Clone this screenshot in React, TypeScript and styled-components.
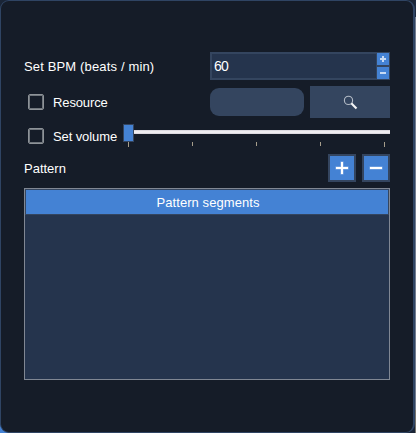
import React from "react";
import styled, { createGlobalStyle } from "styled-components";

const Global = createGlobalStyle`
  * { box-sizing: border-box; }
  body { margin: 0; background: #141b27; overflow: hidden; }
`;

const Window = styled.div`
  display: flex;
  width: 416px;
  height: 433px;
  background:
    linear-gradient(#4482d4, #4482d4) 0 100% / 9px 9px no-repeat,
    #1a2536;
  font: 13px/16px "Liberation Sans", Arial, sans-serif;
  color: #fff;
`;

const Panel = styled.main`
  width: 415px;
  height: 433px;
  padding: 51px 23px 0;
  border: 1px solid #2f4463;
  border-right-width: 2px;
  border-radius: 9px;
  background: #151c28;
`;

const Edge = styled.div`
  width: 1px;
  background: linear-gradient(#1d2a40 0 17px, #737d90 17px 410px, #77746e 410px);
`;

const Row = styled.div<{ $height: number; $gap?: number }>`
  display: flex;
  align-items: center;
  width: 366px;
  height: ${(p) => p.$height}px;
  margin-bottom: ${(p) => p.$gap ?? 0}px;
`;

const Label = styled.span<{ $spacing?: number }>`
  flex: 1;
  padding-top: 2px;
  white-space: pre;
  letter-spacing: ${(p) => p.$spacing ?? 0}px;
`;

const Spinner = styled.div`
  display: flex;
  width: 180px;
  height: 28px;
  border: 1px solid #34455f;
  background: #34455f;
`;

const SpinValue = styled.div`
  flex: 1;
  margin: 1px;
  padding: 4px 0 0 2px;
  line-height: 17px;
  font-size: 14px;
  letter-spacing: -0.8px;
  background: #25344d;
`;

const SpinButtons = styled.div`
  display: flex;
  flex-direction: column;
  gap: 2px;
`;

const SpinButton = styled.button`
  display: flex;
  width: 12px;
  height: 12px;
  padding: 0;
  border: 0;
  background: #4482d4;
`;

const Check = styled.span`
  width: 16px;
  height: 16px;
  margin: 0 9px 0 4px;
  border: 1px solid #8e9398;
  border-radius: 2px;
  background: #151c28;
  box-shadow: inset 0 0 0 1px #70767d;
`;

const Resource = styled.div`
  width: 94px;
  height: 28px;
  margin-right: 6px;
  border-radius: 9px;
  background: #34455f;
`;

const Browse = styled.button`
  display: flex;
  width: 80px;
  height: 32px;
  padding: 0;
  border: 0;
  background: #34455f;
`;

const Slider = styled.div`
  display: grid;
  grid-template: 18px 6px / 11px 256px;
  width: 267px;
  height: 24px;
`;

const Thumb = styled.div`
  width: 11px;
  height: 18px;
  border: 1px solid #34455f;
  background: #4482d4;
`;

const Track = styled.div`
  height: 4px;
  margin-top: 6px;
  border: solid #dcd9e0;
  border-width: 1px 0;
  background: #eeedf0;
`;

const Ticks = styled.div`
  grid-column: 1 / 3;
  display: flex;
  justify-content: space-between;
  padding: 0 5px;
`;

const Tick = styled.i<{ $long?: boolean }>`
  width: 1px;
  height: ${(p) => (p.$long ? 5 : 4)}px;
  background: #a59d8b;
`;

const SquareButton = styled.button`
  display: flex;
  width: 28px;
  height: 28px;
  margin-left: 6px;
  padding: 0;
  border: 2px solid #34455f;
  background: #4482d4;
`;

const List = styled.section`
  width: 366px;
  height: 192px;
  border: 1px solid #808793;
  background: #25344d;
`;

const ListHeader = styled.div`
  height: 26px;
  padding: 5px 0 0 2px;
  border: 1px solid #34455f;
  background: #4482d4;
  text-align: center;
  letter-spacing: 0.07px;
`;

const Plus = () => (
  <svg width="24" height="24" viewBox="0 0 24 24" fill="none">
    <path d="M12 5.5v13M5.5 12h13" stroke="#8bb2e7" strokeWidth="3" />
    <path d="M12 6v12M6 12h12" stroke="#fff" strokeWidth="2" />
  </svg>
);

const Minus = () => (
  <svg width="24" height="24" viewBox="0 0 24 24" fill="none">
    <path d="M5.5 12h13" stroke="#8bb2e7" strokeWidth="3" />
    <path d="M6 12h12" stroke="#fff" strokeWidth="2" />
  </svg>
);

const SmallSign = ({ plus }: { plus?: boolean }) => (
  <svg width="12" height="12" fill="none" stroke="#c7daf3" strokeWidth="2">
    <path d={plus ? "M3 6h6M6 3v6" : "M3 6h6"} />
  </svg>
);

const Magnifier = () => (
  <svg width="80" height="32" fill="none">
    <circle cx="38.5" cy="14.4" r="4.1" stroke="#b4bcc7" strokeWidth="1.1" />
    <path d="M41.3 17.2l5.2 5.2" stroke="#f4f5f6" strokeWidth="2.1" />
  </svg>
);

export default function App() {
  return (
    <>
      <Global />
      <Window>
        <Panel>
          <Row $height={28} $gap={6}>
            <Label $spacing={0.15}>Set BPM (beats / min)</Label>
            <Spinner>
              <SpinValue>60</SpinValue>
              <SpinButtons>
                <SpinButton aria-label="Increase"><SmallSign plus /></SpinButton>
                <SpinButton aria-label="Decrease"><SmallSign /></SpinButton>
              </SpinButtons>
            </Spinner>
          </Row>
          <Row $height={32} $gap={6}>
            <Check />
            <Label $spacing={-0.12}>Resource</Label>
            <Resource />
            <Browse aria-label="Browse"><Magnifier /></Browse>
          </Row>
          <Row $height={24} $gap={6}>
            <Check />
            <Label $spacing={-0.1}>Set volume</Label>
            <Slider>
              <Thumb />
              <Track />
              <Ticks>
                <Tick $long /><Tick /><Tick /><Tick /><Tick $long />
              </Ticks>
            </Slider>
          </Row>
          <Row $height={28} $gap={6}>
            <Label>Pattern</Label>
            <SquareButton aria-label="Add"><Plus /></SquareButton>
            <SquareButton aria-label="Remove"><Minus /></SquareButton>
          </Row>
          <List>
            <ListHeader>Pattern segments</ListHeader>
          </List>
        </Panel>
        <Edge />
      </Window>
    </>
  );
}
